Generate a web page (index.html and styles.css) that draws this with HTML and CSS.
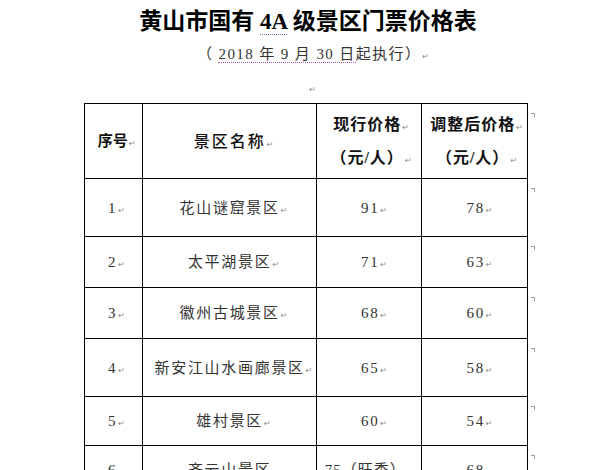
FILE: index.html
```html
<!DOCTYPE html>
<html lang="zh-CN">
<head>
<meta charset="utf-8">
<title>黄山市国有4A级景区门票价格表</title>
<link rel="stylesheet" href="styles.css">
</head>
<body>
<div class="page">
  <h1 class="title">黄山市国有 <span class="grammar">4A</span> 级景区门票价格表</h1>
  <p class="subtitle">（ <span class="grammar-sub">2018 年 9 月 30 日</span>起执行）<span class="pm">↵</span></p>
  <p class="blank"><span class="pm">↵</span></p>
  <table class="prices">
    <colgroup><col class="c1"><col class="c2"><col class="c3"><col class="c4"></colgroup>
    <thead>
      <tr class="r-head">
        <th class="h-no">序号<span class="pm">↵</span></th>
        <th class="h-name">景区名称<span class="pm">↵</span></th>
        <th class="h-price">现行价格<span class="pm">↵</span><br>（元/人）<span class="pm">↵</span></th>
        <th class="h-price end">调整后价格<span class="pm">↵</span><br>（元/人）<span class="pm">↵</span></th>
      </tr>
    </thead>
    <tbody>
      <tr class="r-58">
        <td>1<span class="pm">↵</span></td>
        <td>花山谜窟景区<span class="pm">↵</span></td>
        <td>91<span class="pm">↵</span></td>
        <td class="end">78<span class="pm">↵</span></td>
      </tr>
      <tr class="r-51">
        <td>2<span class="pm">↵</span></td>
        <td>太平湖景区<span class="pm">↵</span></td>
        <td>71<span class="pm">↵</span></td>
        <td class="end">63<span class="pm">↵</span></td>
      </tr>
      <tr class="r-51">
        <td>3<span class="pm">↵</span></td>
        <td>徽州古城景区<span class="pm">↵</span></td>
        <td>68<span class="pm">↵</span></td>
        <td class="end">60<span class="pm">↵</span></td>
      </tr>
      <tr class="r-58">
        <td>4<span class="pm">↵</span></td>
        <td>新安江山水画廊景区<span class="pm">↵</span></td>
        <td>65<span class="pm">↵</span></td>
        <td class="end">58<span class="pm">↵</span></td>
      </tr>
      <tr class="r-49">
        <td>5<span class="pm">↵</span></td>
        <td>雄村景区<span class="pm">↵</span></td>
        <td>60<span class="pm">↵</span></td>
        <td class="end">54<span class="pm">↵</span></td>
      </tr>
      <tr class="r-48">
        <td>6<span class="pm">↵</span></td>
        <td>齐云山景区<span class="pm">↵</span></td>
        <td class="tight">75（旺季）<span class="pm">↵</span></td>
        <td class="end">68<span class="pm">↵</span></td>
      </tr>
    </tbody>
  </table>
</div>
</body>
</html>
```
FILE: styles.css
```css
html, body {
  margin: 0;
  padding: 0;
  background: #ffffff;
}

.page {
  width: 614px;
  font-family: "Liberation Serif", "Noto Sans CJK SC", serif;
  color: #222;
}

.title {
  margin: 7px 0 0;
  padding-left: 2px;
  text-align: center;
  font-family: "Liberation Serif", "Noto Sans CJK SC", sans-serif;
  font-size: 23px;
  line-height: 30px;
  font-weight: 700;
  color: #000;
}

.grammar {
  border-bottom: 1px dotted #8a5fb0;
}

.subtitle {
  margin: 0;
  padding-left: 12px;
  text-align: center;
  font-size: 15px;
  line-height: 34px;
  letter-spacing: 1.4px;
  color: #333;
}

.grammar-sub {
  border-bottom: 1px dotted #a05aa8;
}

.blank {
  margin: 0;
  padding-left: 10px;
  text-align: center;
  line-height: 32px;
  font-size: 15px;
}

.pm {
  font-family: "DejaVu Sans", sans-serif;
  font-size: 8px;
  line-height: 1;
  font-weight: 400;
  letter-spacing: 0;
  color: #8a8a8a;
  margin-left: 1px;
}

.prices {
  margin-left: 84px;
  border-collapse: collapse;
  table-layout: fixed;
  width: 444px;
}

.c1 { width: 58px; }
.c2 { width: 174px; }
.c3 { width: 105px; }
.c4 { width: 106px; }

.prices th,
.prices td {
  border: 1px solid #000;
  padding: 0;
  text-align: center;
  vertical-align: middle;
}

.prices th {
  font-family: "Liberation Serif", "Noto Sans CJK SC", sans-serif;
  font-size: 16px;
  font-weight: 700;
  color: #111;
  line-height: 33px;
}

.prices th.h-no {
  font-size: 15px;
  padding-left: 6px;
}

.prices th.h-name {
  font-weight: 500;
  letter-spacing: 2px;
  padding-left: 8px;
}

.prices th.h-price {
  letter-spacing: 1px;
  padding-left: 4px;
}

.prices td {
  font-size: 15px;
  letter-spacing: 1.7px;
  color: #333;
  line-height: 20px;
}

.prices td:first-child {
  padding-left: 6px;
}

.prices td:nth-child(2) {
  padding-left: 8px;
}

.prices td:nth-child(3),
.prices td:nth-child(4) {
  padding-left: 10px;
}

.prices td.tight {
  padding-left: 0;
  white-space: nowrap;
  letter-spacing: 1px;
}

.r-head { height: 75px; }
.r-58 { height: 58px; }
.r-51 { height: 51px; }
.r-49 { height: 49px; }
.r-48 { height: 48px; }

.end {
  position: relative;
}

.end::after {
  content: "";
  position: absolute;
  right: -8px;
  top: 9px;
  width: 3px;
  height: 3px;
  border-top: 1px solid #9a9a9a;
  border-right: 1px solid #9a9a9a;
}
```
